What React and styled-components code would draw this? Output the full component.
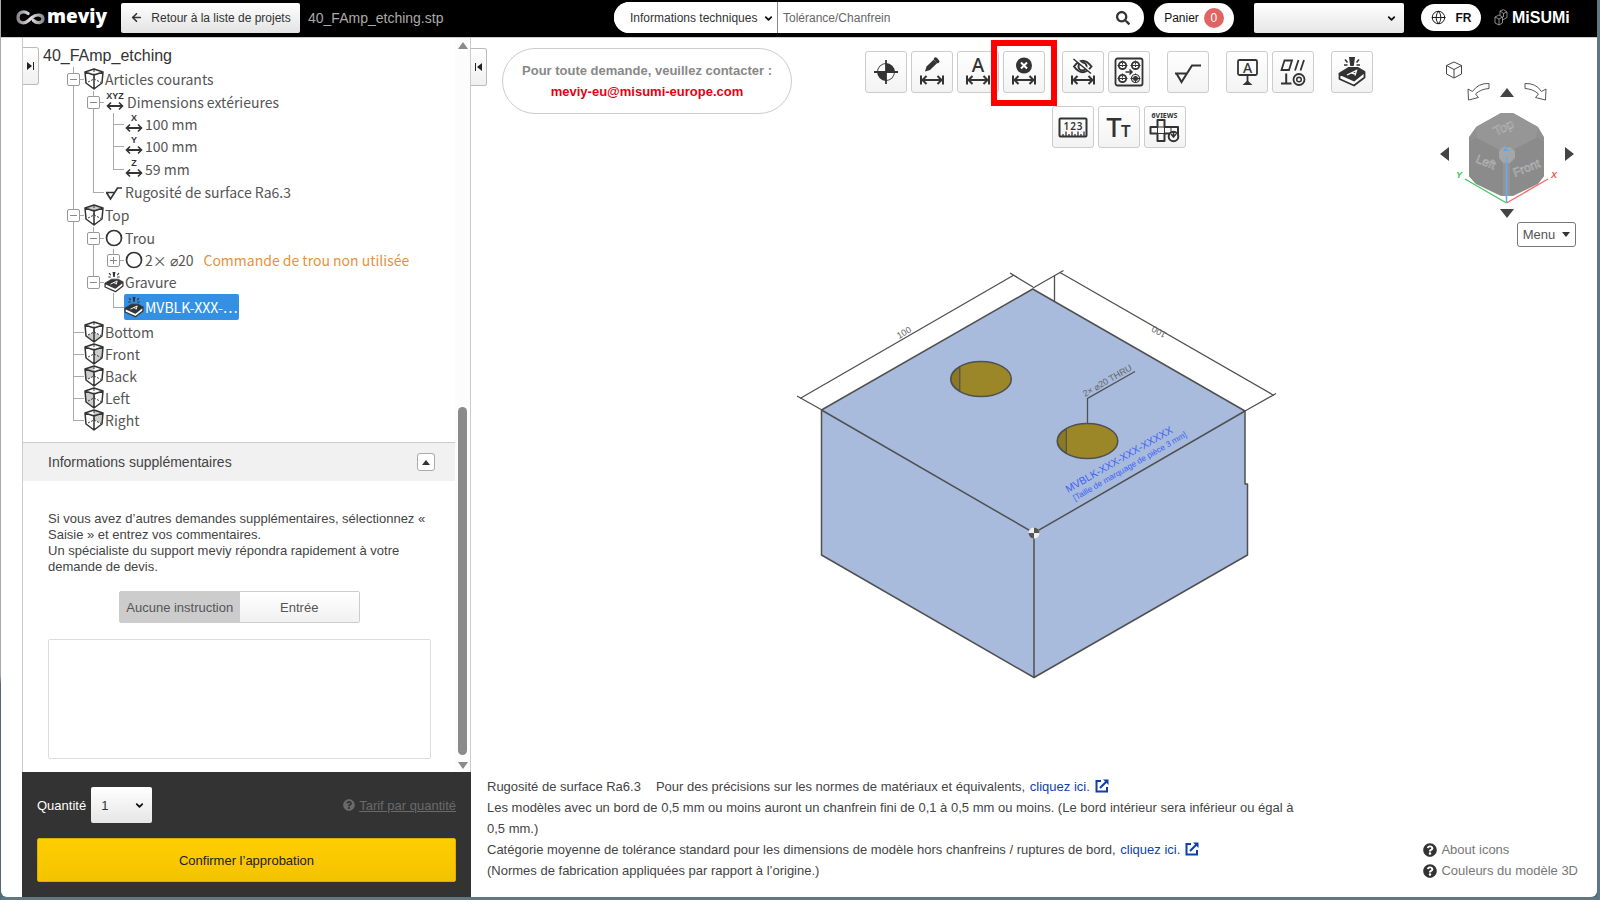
import React, { useState } from 'react';
import styled, { createGlobalStyle } from 'styled-components';
import { ArrowLeft, ChevronDown, Globe } from 'lucide-react';
import { FaSearch, FaQuestionCircle } from 'react-icons/fa';

const GlobalStyle = createGlobalStyle`
  * {
    box-sizing: border-box;
  }

  body {
    margin: 0;
    background: linear-gradient(to bottom, #a9a9ae 0%, #a9a9ae 75%, #4f6a76 76%, #4f6a76 100%);
    color: #444;
    font-family: "Liberation Sans", Arial, sans-serif;
    font-size: 13px;
  }

  button, select, input, textarea {
    font-family: inherit;
    color: inherit;
    margin: 0;
  }

  button {
    cursor: pointer;
    padding: 0;
  }
`;

const Window = styled.div`
  display: flex;
  flex-direction: column;
  height: 100vh;
  border: solid #5d7883;
  border-width: 0 3px 3px 0;
  margin-left: 1px;
`;

/* ---------- Header ---------- */

const Header = styled.header`
  display: flex;
  align-items: center;
  flex-shrink: 0;
  height: 37px;
  padding-bottom: 2px;
  background: #000;
`;

const HeaderStart = styled.div`
  display: flex;
  align-items: center;
  flex: 0 1 613px;
  padding-left: 15px;
`;

const Brand = styled.a`
  display: flex;
  align-items: center;
  gap: 2px;
  width: 105px;
  color: #fff;
  font: 800 19px/24px "Open Sans", sans-serif;
  text-decoration: none;

  span {
    padding-bottom: 4px;
  }
`;

const BackButton = styled.button`
  display: flex;
  align-items: center;
  justify-content: center;
  gap: 8px;
  width: 179px;
  height: 30px;
  border: 0;
  border-radius: 2px;
  background: linear-gradient(#fff, #e3e3e3);
  color: #333;
  font-size: 12px;
`;

const FileName = styled.span`
  margin-left: 8px;
  color: #aaa;
  font-size: 14px;
`;

const Search = styled.form`
  display: flex;
  align-items: center;
  flex: 1;
  height: 31px;
  margin: 0;
  border-radius: 16px;
  background: #fff;
  overflow: hidden;
`;

const SelectBox = styled.div`
  position: relative;
  flex: 0 0 auto;
  width: ${props => props.$width}px;
  height: ${props => props.$height || 30}px;
  margin-right: ${props => props.$after || 0}px;

  select {
    appearance: none;
    width: 100%;
    height: 100%;
    padding: 0 ${props => props.$pad || 8}px;
    border: 0;
    border-radius: ${props => (props.$plain ? 0 : 2)}px;
    border-right: ${props => (props.$plain ? '1px solid #888' : '0')};
    background: ${props => (props.$plain ? '#fff' : 'linear-gradient(#fff, #e6e6e6)')};
    color: #333;
    font-size: ${props => props.$size || 12}px;
  }

  svg {
    position: absolute;
    top: 50%;
    right: ${props => (props.$plain ? 4 : 7)}px;
    margin-top: -5px;
    color: #111;
    pointer-events: none;
  }
`;

const SearchInput = styled.input`
  flex: 1;
  min-width: 0;
  height: 100%;
  padding: 0 5px;
  border: 0;
  outline: 0;
  font-size: 12px;

  &::placeholder {
    color: #666;
    opacity: 1;
  }
`;

const SearchButton = styled.button`
  display: flex;
  align-items: center;
  width: 28px;
  border: 0;
  background: none;
  color: #333;
`;

const HeaderEnd = styled.div`
  display: flex;
  align-items: center;
  flex-shrink: 0;
  padding: 0 28px 0 10px;
`;

const Pill = styled.button`
  display: flex;
  align-items: center;
  justify-content: center;
  gap: ${props => props.$gap}px;
  width: ${props => props.$width}px;
  height: ${props => props.$height}px;
  margin-right: ${props => props.$after}px;
  border: 0;
  border-radius: 16px;
  background: #fff;
  color: #111;
  font-size: 12px;
  font-weight: ${props => (props.$bold ? 700 : 400)};
`;

const CartCount = styled.span`
  width: 20px;
  border-radius: 50%;
  background: #e06464;
  color: #fff;
  line-height: 20px;
`;

const Misumi = styled.a`
  display: flex;
  align-items: center;
  gap: 4px;
  width: 75px;
  color: #fff;
  font: 700 16px/20px "Liberation Sans", sans-serif;
  text-decoration: none;

  svg {
    flex-shrink: 0;
  }
`;

/* ---------- Layout ---------- */

const Body = styled.div`
  display: flex;
  flex: 1;
  min-height: 0;
  border-top: 1px solid #ccc;
  border-radius: 0 0 6px 6px;
  background: #fff;
`;

const Sidebar = styled.aside`
  display: flex;
  flex-direction: column;
  flex: 0 0 449px;
  margin-left: 21px;
  border: solid #ccc;
  border-width: 0 1px;
`;

const SidebarBody = styled.div`
  display: flex;
  flex: 1;
  min-height: 0;
`;

const SidebarContent = styled.div`
  flex: 1;
  min-width: 0;
  overflow: hidden;
`;

const ScrollTrack = styled.div`
  display: flex;
  flex-direction: column;
  align-items: center;
  width: 15px;
  padding: 4px 0 3px;
  background: #fcfcfc;
`;

const ScrollArrow = styled.span`
  border: 5px solid transparent;
  border-${props => (props.$down ? 'top' : 'bottom')}: 7px solid #8a8a8a;
  border-${props => (props.$down ? 'bottom' : 'top')}-width: 0;
`;

const ScrollThumb = styled.div`
  width: 9px;
  height: 348px;
  margin: auto 0 7px;
  border-radius: 5px;
  background: #8a8a8a;
`;

const EdgeButton = styled.button`
  display: flex;
  align-items: center;
  justify-content: center;
  flex-shrink: 0;
  width: 16px;
  height: 38px;
  border: 1px solid #bbb;
  border-left-width: 0;
  border-radius: 0 3px 3px 0;
  background: linear-gradient(#fff, #f0f0f0);
`;

/* ---------- Tree ---------- */

const TreeArea = styled.div`
  display: flex;
  align-items: flex-start;
  gap: 4px;
  height: 404px;
  padding-top: 9px;
`;

const TreeTitle = styled.h1`
  margin: 0;
  color: #333;
  font-size: 16px;
  font-weight: 400;
  line-height: 18px;
`;

const TreeList = styled.ul`
  margin: 2px 0 0 21px;
  padding: 0;
  list-style: none;
  color: #555;
  font: 14px/22px "Noto Sans CJK JP", sans-serif;
`;

const TreeRow = styled.li`
  display: flex;
  align-items: center;
  height: ${props => props.$height || 22}px;
  white-space: nowrap;
`;

// vertical and horizontal strokes are two background layers of one cell
const Guide = styled.span`
  display: flex;
  align-items: center;
  align-self: stretch;
  width: 20px;
  padding-left: 3px;
  background:
    linear-gradient(#aaa, #aaa) 9px 0 / ${props => (props.$v ? 1 : 0)}px ${props => (props.$v === 'half' ? '50%' : '100%')} no-repeat,
    linear-gradient(#aaa, #aaa) 9px 50% / ${props => (props.$h ? 11 : 0)}px 1px no-repeat;
`;

const Toggle = styled.button`
  display: flex;
  align-items: center;
  justify-content: center;
  width: 13px;
  height: 13px;
  border: 1px solid #999;
  border-radius: 2px;
  background: #fff;
`;

const TreeItem = styled.span`
  display: flex;
  align-items: center;
  height: ${props => (props.$selected ? '26px' : '100%')};
  padding-right: 1px;
  border-radius: 2px;
  background: ${props => (props.$selected ? '#3390e3' : 'none')};
  color: ${props => (props.$selected ? '#fff' : 'inherit')};

  svg {
    flex-shrink: 0;
    margin-right: 1px;
    color: #333;
  }
`;

const Warning = styled.span`
  margin-left: 10px;
  color: #e5933c;
`;

/* ---------- Extra information ---------- */

const SectionHead = styled.div`
  display: flex;
  align-items: center;
  justify-content: space-between;
  height: 39px;
  padding: 0 20px 0 25px;
  border-top: 1px solid #ccc;
  background: #f1f1f1;
`;

const SectionTitle = styled.h2`
  margin: 0;
  color: #444;
  font-size: 14px;
  font-weight: 400;
`;

const CollapseButton = styled.button`
  display: flex;
  align-items: center;
  justify-content: center;
  width: 18px;
  height: 18px;
  border: 1px solid #aaa;
  border-radius: 3px;
  background: #fff;
`;

const SectionBody = styled.div`
  padding: 30px 24px 0 25px;

  p {
    margin: 0;
    line-height: 16px;
  }
`;

const Segmented = styled.div`
  display: flex;
  width: 241px;
  height: 32px;
  margin: 16px auto;
  border: 1px solid #ccc;
  border-radius: 2px;
`;

const Segment = styled.button`
  flex: 1;
  border: 0;
  background: ${props => (props.$active ? '#ccc' : 'linear-gradient(#fff, #f1f1f1)')};
  color: #555;
  font-size: 13px;
`;

const Comment = styled.textarea`
  display: block;
  width: 100%;
  height: 120px;
  border: 1px solid #ddd;
  border-radius: 2px;
  background: #fff;
  resize: none;
`;

const OrderPanel = styled.div`
  flex-shrink: 0;
  margin: 0 -1px;
  padding: 15px 15px;
  background: #333;
`;

const OrderRow = styled.div`
  display: flex;
  align-items: center;
  margin-bottom: 15px;

  label {
    margin-right: 5px;
    color: #fff;
    font-size: 13px;
  }
`;

const PriceLink = styled.a`
  display: flex;
  align-items: center;
  gap: 4px;
  margin-left: auto;
  color: #6a6a6a;
  font-size: 13px;
`;

const ConfirmButton = styled.button`
  display: block;
  width: 100%;
  height: 44px;
  border: 1px solid #dcb000;
  border-radius: 2px;
  background: linear-gradient(#ffce00, #f3c300);
  color: #222;
  font-size: 13px;
`;

/* ---------- Viewer ---------- */

const Viewer = styled.main`
  display: flex;
  flex-direction: column;
  flex: 1;
  min-width: 0;
`;

const TopBar = styled.div`
  display: flex;
  align-items: flex-start;
  padding-top: 10px;
`;

const Contact = styled.div`
  flex-shrink: 0;
  width: 290px;
  margin: 0 10px 0 15px;
  padding: 11px 0;
  border: 1px solid #ccc;
  border-radius: 33px;
  color: #888;
  font-weight: 700;
  line-height: 21px;
  text-align: center;

  a {
    color: #e60012;
    text-decoration: none;
  }
`;

const Toolbar = styled.div`
  display: flex;
  flex-direction: column;
  align-items: center;
  flex: 1;
  gap: 13px;
  padding-top: 3px;
`;

const ToolRow = styled.div`
  display: flex;
  gap: 17px;
`;

const ToolGroup = styled.div`
  display: flex;
  gap: 4px;
`;

const ToolButton = styled.button`
  position: relative;
  width: 42px;
  height: 42px;
  border: 1px solid #ccc;
  border-radius: 3px;
  background: linear-gradient(#fff, #f3f3f3);
  color: #333;

  svg {
    display: block;
  }
`;

const Highlight = styled.span`
  position: absolute;
  top: -12px;
  left: -13px;
  width: 66px;
  height: 66px;
  border: 6px solid #f00;
`;

const ViewNav = styled.div`
  flex-shrink: 0;
  width: 162px;
  padding: 12px 21px 3px 3px;
`;

const NavRow = styled.div`
  display: flex;
  align-items: ${props => props.$align || 'center'};
  justify-content: ${props => props.$justify || 'center'};
  gap: ${props => props.$gap || 0}px;
  height: ${props => props.$height}px;
  padding: ${props => props.$padding || 0};
`;

const NavButton = styled.button`
  display: flex;
  border: 0;
  background: none;
  color: #444;
`;

const MenuButton = styled.button`
  display: flex;
  align-items: center;
  justify-content: center;
  gap: 7px;
  width: 59px;
  height: 25px;
  border: 1px solid #777;
  border-radius: 3px;
  background: #fff;
  color: #555;
  font-size: 13px;
`;

const Stage = styled.div`
  display: flex;
  flex: 1;
  align-items: flex-start;
  justify-content: center;
  min-height: 0;
`;

const Footer = styled.footer`
  display: flex;
  align-items: flex-end;
  justify-content: space-between;
  padding: 0 19px 16px 16px;
  line-height: 21px;
`;

const Notes = styled.div`
  flex: 0 1 820px;

  p {
    margin: 0;
  }

  a {
    margin-left: 1px;
    color: #0f3fa8;
    text-decoration: none;
  }

  svg {
    margin-left: 5px;
    vertical-align: -2px;
  }
`;

const Gap = styled.span`
  margin-right: 15px;
`;

const HelpLinks = styled.nav`
  display: flex;
  flex-direction: column;

  a {
    display: flex;
    align-items: center;
    gap: 4px;
    color: #777;
    text-decoration: none;
  }

  svg {
    color: #333;
  }
`;

/* ---------- Icons ---------- */

const faces = {
  top: '10,1 19,4 10,7 1,4',
  bottom: '2,15 10,11 18,15 10,21',
  front: '10,7 19,4 18,15 10,21',
  back: '1,4 10,1 10,11 2,15',
  left: '1,4 10,7 10,21 2,15',
  right: '10,1 19,4 18,15 10,11',
};

const CubeIcon = ({ face }) => (
  <svg width="20" height="22" viewBox="0 0 20 22" fill="none" stroke="currentColor">
    {face && <polygon points={faces[face]} fill="#ccc" stroke="none" />}
    <path d="M10 1L19 4L18 15L10 21L2 15L1 4ZM1 4L10 7L19 4M10 7V21" strokeWidth="1.5" strokeLinejoin="round" />
    <path d="M10 2V11L3 14.5M10 11L17 14.5" strokeDasharray="2 1.4" />
  </svg>
);

const AxisIcon = ({ text, width = 20 }) => (
  <svg width={width} height="24" viewBox={`0 -2 ${width} 24`} fill="none" stroke="currentColor">
    <text x={width / 2} y="7" textAnchor="middle" fontFamily="Liberation Sans" fontWeight="700" fontSize="9" fill="currentColor" stroke="none">{text}</text>
    <path d={`M${width / 2 - 7} 14H${width / 2 + 7}`} strokeWidth="2" />
    <path d={`M${width / 2 - 4} 10.500L${width / 2 - 7.5} 14L${width / 2 - 4} 17.500M${width / 2 + 4} 10.500L${width / 2 + 7.5} 14L${width / 2 + 4} 17.500`} strokeWidth="1.6" />
  </svg>
);

const RoughIcon = () => (
  <svg width="20" height="22" viewBox="0 0 20 22" fill="none" stroke="currentColor" strokeWidth="1.7">
    <path d="M2 11.500H11M2.500 11.500L6.500 18L13.500 7H18" />
  </svg>
);

const CircleIcon = () => (
  <svg width="20" height="20" viewBox="0 0 20 20" fill="none" stroke="currentColor" strokeWidth="1.7">
    <circle cx="10" cy="10" r="7.500" />
  </svg>
);

const etchShape = (
  <g>
    <path d="M8.500 22.500L17.500 17H27L33 20.500L23.500 28.500Z" fill="currentColor" stroke="currentColor" strokeLinejoin="round" />
    <path d="M8.500 23V28L23 34.500L33.500 26.500V21L23 29.500Z" fill="#fff" stroke="currentColor" strokeWidth="1.8" strokeLinejoin="round" />
    <path d="M16 24L25.500 19.500L24 24.500M20.500 22L24.500 23" fill="none" stroke="#fff" strokeWidth="1.300" />
    <path d="M19 7H23L22 14H20Z" fill="currentColor" />
    <path d="M14 8.500L16.500 11.500M28 8.500L25.500 11.500M13 14H16.500M29 14H25.500" stroke="currentColor" strokeWidth="1.500" />
  </g>
);

const EtchIcon = () => (
  <svg width="20" height="22" viewBox="7 6 28 30">{etchShape}</svg>
);

const Tool = ({ children }) => (
  <svg width="40" height="40" viewBox="1 1 40 40" fill="none" stroke="currentColor" strokeWidth="1.8">
    {children}
  </svg>
);

const DimArrow = () => (
  <path d="M10 24.500V33.500M32 24.500V33.500M11 29H31M15.500 25L11.500 29L15.500 33M26.500 25L30.500 29L26.500 33" strokeWidth="2" />
);

const toolIcons = {
  datum: (
    <Tool>
      <circle cx="21" cy="21" r="8" />
      <path d="M21 21V13A8 8 0 0 0 13 21ZM21 21V29A8 8 0 0 0 29 21Z" fill="#fff" stroke="none" />
      <path d="M21 21V13A8 8 0 0 1 29 21ZM21 21V29A8 8 0 0 1 13 21Z" fill="currentColor" stroke="none" />
      <path d="M21 9V33M9 21H33" />
    </Tool>
  ),
  edit: (
    <Tool>
      <DimArrow />
      <path d="M14 20.500L15.500 15.500L22.500 8.800L26 12.200L19 19Z" fill="currentColor" stroke="none" />
      <path d="M24.500 8L26.700 10.500" strokeWidth="3.500" strokeLinecap="round" />
    </Tool>
  ),
  letter: (
    <Tool>
      <DimArrow />
      <text x="21" y="21" textAnchor="middle" fontFamily="Noto Sans" fontWeight="500" fontSize="19" fill="currentColor" stroke="none">A</text>
    </Tool>
  ),
  remove: (
    <Tool>
      <DimArrow />
      <circle cx="21" cy="14.500" r="8" fill="currentColor" stroke="none" />
      <path d="M18 11.500L24 17.500M24 11.500L18 17.500" stroke="#fff" strokeWidth="2" />
    </Tool>
  ),
  hide: (
    <Tool>
      <DimArrow />
      <path d="M12 15.500Q20.500 4 29.500 15.500Q20.500 27 12 15.500Z" strokeWidth="2" />
      <circle cx="20.500" cy="15.500" r="4" strokeWidth="2" />
      <path d="M13 7.500L30 22" stroke="#fff" strokeWidth="2" />
      <path d="M11.500 8L29 22.500" strokeWidth="1.600" />
    </Tool>
  ),
  pattern: (
    <Tool>
      <rect x="7.500" y="7.500" width="27" height="27" rx="2" />
      <circle cx="14.500" cy="14.500" r="3.700" />
      <circle cx="27.500" cy="14.500" r="3.700" />
      <circle cx="14.500" cy="27.500" r="3.700" />
      <circle cx="27.500" cy="27.500" r="4" strokeWidth="1.200" />
      <circle cx="27.500" cy="27.500" r="1.600" fill="currentColor" />
      <path d="M9.500 14.500H19.500M22.500 14.500H32.500M9.500 27.500H19.500M22.500 27.500H32.500" strokeWidth="1" />
      <path d="M14.500 9.500V19.500M27.500 9.500V19.500M14.500 22.500V32.500M27.500 22.500V32.500" strokeWidth="1" strokeDasharray="1.500 1" />
      <path d="M17.500 21H24M21.500 18.500L24 21L21.500 23.500" strokeWidth="1.500" />
    </Tool>
  ),
  rough: (
    <Tool><path d="M8 22.500H20.500M9.500 22.500L14.500 31L25 14.500H34" strokeWidth="2" /></Tool>
  ),
  label: (
    <Tool>
      <rect x="12" y="9" width="19" height="15" rx="1.500" />
      <text x="21.500" y="21.500" textAnchor="middle" fontFamily="Noto Sans" fontWeight="500" fontSize="14" fill="currentColor" stroke="none">A</text>
      <path d="M21.500 24V31" />
      <path d="M16.500 34L21.500 29.500L26.500 34Z" fill="currentColor" stroke="none" />
    </Tool>
  ),
  tolerance: (
    <Tool>
      <path d="M9.500 19L12.500 9.500H20L17 19ZM23 19.500L26.500 9M28.500 19.500L32 9" />
      <path d="M9 32.500H19.500M14.200 32.500V22.500" strokeWidth="2" />
      <circle cx="27" cy="28.500" r="5.500" />
      <circle cx="27" cy="28.500" r="2.300" strokeWidth="1.500" />
    </Tool>
  ),
  etch: <Tool>{etchShape}</Tool>,
  ruler: (
    <Tool>
      <rect x="7.500" y="12.500" width="27" height="18" rx="1" strokeWidth="2" />
      <text x="21.500" y="24" textAnchor="middle" fontFamily="Noto Sans" fontWeight="600" fontSize="10" letterSpacing="1" fill="currentColor" stroke="none">123</text>
      <path d="M11 30V28M14 30V25.500M17 30V28M20 30V25.500M23 30V28M26 30V25.500M29 30V28M32 30V25.500" strokeWidth="1.300" />
    </Tool>
  ),
  text: (
    <Tool>
      <g fontFamily="Inter" fontWeight="500" fill="currentColor" stroke="none">
        <text x="7.500" y="31" fontSize="26">T</text>
        <text x="22.500" y="31" fontSize="16" fontWeight="600">T</text>
      </g>
    </Tool>
  ),
  views: (
    <Tool>
      <text x="20.500" y="11.500" textAnchor="middle" fontFamily="Noto Sans" fontWeight="700" fontSize="7" fill="currentColor" stroke="none">6VIEWS</text>
      <path d="M13.500 14H20.500V21H34V27.500H20.500V35H13.500V27.500H6.500V21H13.500Z" strokeWidth="2" strokeLinejoin="round" />
      <path d="M13.500 21H20.500V27.500H13.500ZM27 21V27.500" strokeWidth="1" />
      <circle cx="29.500" cy="30.500" r="4.800" fill="#f6f6f6" strokeWidth="2" />
      <path d="M29.500 25V30M27 28L29.500 31L32 28" strokeWidth="1.500" />
    </Tool>
  ),
};

const ExternalIcon = () => (
  <svg width="14" height="14" viewBox="0 0 14 14" fill="none" stroke="currentColor" strokeWidth="2">
    <path d="M6 2H1.500V12.500H12V8M5 9L11.500 2.500" />
    <path d="M8 0.500H13.500V6Z" fill="currentColor" stroke="none" />
  </svg>
);

const Arrow = ({ dir }) => {
  const shapes = {
    up: [14, 9, '0,9 7,0 14,9'],
    down: [14, 9, '0,0 14,0 7,9'],
    left: [9, 14, '9,0 9,14 0,7'],
    right: [9, 14, '0,0 9,7 0,14'],
  };
  const [w, h, points] = shapes[dir];
  return (
    <svg width={w} height={h}><polygon points={points} fill="currentColor" /></svg>
  );
};

const PanelIcon = ({ open }) => (
  <svg width="8" height="8" viewBox="0 0 8 8" fill="#222">
    {open ? <path d="M0 0H1V8H0ZM7 0V8L2 4Z" /> : <path d="M7 0H6V8H7ZM0 0V8L5 4Z" />}
  </svg>
);

const SmallArrow = ({ down }) => (
  <svg width="8" height="5"><polygon points={down ? '0,0 8,0 4,5' : '0,5 8,5 4,0'} fill="#333" /></svg>
);

const RotateIcon = ({ flip }) => (
  <svg width="23" height="20" viewBox="0 0 23 20" fill="#fff" stroke="#555" strokeLinejoin="round">
    <path d={flip
      ? 'M1 1.500Q12 1 17.500 9.500L22 7L21.500 18L11.500 15.500L14.500 12Q9 7 1 6.500Z'
      : 'M22 1.500Q11 1 5.500 9.500L1 7L1.500 18L11.500 15.500L8.500 12Q14 7 22 6.500Z'} />
  </svg>
);

const InfinityMark = () => (
  <svg width="29" height="15" viewBox="0 0 29 15" fill="none">
    <defs>
      <linearGradient id="mark" x1="0" x2="1">
        <stop offset="0" stopColor="#8d858d" />
        <stop offset="0.5" stopColor="#e6e2e6" />
        <stop offset="1" stopColor="#8a8a8a" />
      </linearGradient>
    </defs>
    <path d="M12 3.500C8 0.500 2 2 2 7.500C2 13 8 14.500 12.500 10.500L16 7.500C20 4 27 4 27 8.800C27 13.500 20.500 13.500 17.500 10.500" stroke="url(#mark)" strokeWidth="3.200" strokeLinecap="round" />
  </svg>
);

const MisumiMark = () => (
  <svg width="14" height="17" viewBox="0 0 14 17" fill="none" stroke="#aaa" strokeWidth="0.8">
    <path d="M1 8L5 6L8.500 8V14L5 16L1 14ZM1 8L5 10L8.500 8M5 10V16M6 2L9.500 0.600L13 3V8.500L8.500 11M6 2L9.500 4.500L13 3M9.500 4.500V8M6 2V6.500" />
  </svg>
);

const ViewCube = () => (
  <svg width="116" height="100" viewBox="1449 104 116 100">
    <path d="M1501 113H1513L1538 127L1544 137V176L1538 184L1513 196H1501L1476 184L1469 176V137L1476 127Z" fill="#909090" />
    <path d="M1476 138L1501 151L1506.500 147L1512 151L1537 138L1544 142V176L1538 183L1513 195H1500L1475 183L1469 176V142Z" fill="#8b8b8b" />
    <path d="M1476 127L1501 113H1513L1538 127L1536 138L1512 150H1501L1477 138Z" fill="#969696" />
    <path d="M1503 159V196H1510V159Z" fill="#949494" />
    <path d="M1499 151L1503 147H1510L1515 151V158L1510 163H1503L1499 158Z" fill="#a6a6a6" />
    <g fontFamily="Liberation Sans" fontSize="13" fill="#919191" stroke="#bdbdbd" strokeWidth="0.500">
      <text transform="translate(1496 136) rotate(-26)">Top</text>
      <text transform="translate(1475 162) rotate(22)" fontSize="12">Left</text>
      <text transform="translate(1515 177) rotate(-22)" fontSize="12">Front</text>
    </g>
    <path d="M1506.500 156V202" stroke="#6aa9ec" strokeWidth="1.600" />
    <path d="M1506.500 203L1465 179" stroke="#46c862" strokeWidth="1.400" />
    <path d="M1506.500 203L1548 179" stroke="#f26d6d" strokeWidth="1.400" />
    <g fontFamily="Liberation Sans" fontSize="9" fontStyle="italic" fontWeight="700">
      <text x="1503" y="151" fill="#5aa5f0">Z</text>
      <text x="1456" y="178" fill="#35c455">Y</text>
      <text x="1551" y="178" fill="#f25555">X</text>
    </g>
  </svg>
);

const Model = () => (
  <svg width="509" height="440" viewBox="0 0 509 440" fill="none" stroke="#505050" strokeWidth="1.500">
    <path d="M252.700 39L465 161V234H467.500V305L254 427.500L41.500 305V160Z" fill="#a8bbdc" strokeLinejoin="round" />
    <path d="M41.500 160L254 283L465 161M254 283V427" />
    <g fill="#9b8728">
      <ellipse cx="201" cy="129" rx="30.300" ry="17.500" />
      <ellipse cx="307.500" cy="191" rx="30.300" ry="17.500" />
    </g>
    <path d="M171 129A30 17.500 0 0 1 179.800 117V141A30 17.500 0 0 1 171 129ZM277.500 191A30 17.500 0 0 1 286.300 179V203A30 17.500 0 0 1 277.500 191Z" fill="#8b7924" strokeWidth="1.200" />
    <g strokeWidth="1.300">
      <path d="M20 148.500L234 25M17 146L42 160M230 23L253 37" />
      <path d="M280 22.500L494 145.500M253 38L283.500 20.500M465 161L496 143.500M274.500 26V51" />
      <path d="M307.500 173V148.500L355 121.500" />
    </g>
    <g fontFamily="Liberation Sans" fontSize="9" fill="#666" stroke="none">
      <text transform="translate(119 89) rotate(-30)">100</text>
      <text transform="translate(387 83) rotate(210)">100</text>
      <text transform="translate(305 147) rotate(-30)">2× ⌀20 THRU</text>
    </g>
    <g fontFamily="Liberation Sans" fill="#3c62f5" stroke="none">
      <text transform="translate(288 243) rotate(-30)" fontSize="10.400">MVBLK-XXX-XXX-XXXXX</text>
      <text transform="translate(295 251) rotate(-30)" fontSize="8.200">[Taille de marquage de pièce 3 mm]</text>
    </g>
    <circle cx="254" cy="283" r="5.500" fill="#eee" stroke="none" />
    <path d="M254 283V277.500A5.500 5.500 0 0 1 259.500 283ZM254 283V288.500A5.500 5.500 0 0 1 248.500 283Z" fill="#555" stroke="none" />
  </svg>
);

/* ---------- Data ---------- */

// guides: | full line, + branch, L last branch, - collapsible, * collapsible last, space empty
const treeRows = [
  { guides: '-', open: true, icon: <CubeIcon />, label: 'Articles courants', height: 24 },
  { guides: '|-', open: true, icon: <AxisIcon text="XYZ" width={22} />, label: 'Dimensions extérieures' },
  { guides: '||+', icon: <AxisIcon text="X" />, label: '100 mm' },
  { guides: '||+', icon: <AxisIcon text="Y" />, label: '100 mm' },
  { guides: '||L', icon: <AxisIcon text="Z" />, label: '59 mm', height: 24 },
  { guides: '|L', icon: <RoughIcon />, label: 'Rugosité de surface Ra6.3' },
  { guides: '-', open: true, icon: <CubeIcon face="top" />, label: 'Top', height: 24 },
  { guides: '|-', open: true, icon: <CircleIcon />, label: 'Trou' },
  { guides: '||*', icon: <CircleIcon />, label: '2× ⌀20', warning: 'Commande de trou non utilisée' },
  { guides: '|*', open: true, icon: <EtchIcon />, label: 'Gravure' },
  { guides: '| L', icon: <EtchIcon />, label: 'MVBLK-XXX-…', selected: true, height: 28 },
  { guides: '+', icon: <CubeIcon face="bottom" />, label: 'Bottom' },
  { guides: '+', icon: <CubeIcon face="front" />, label: 'Front' },
  { guides: '+', icon: <CubeIcon face="back" />, label: 'Back' },
  { guides: '+', icon: <CubeIcon face="left" />, label: 'Left' },
  { guides: 'L', icon: <CubeIcon face="right" />, label: 'Right' },
];

const toolRows = [
  [['datum', 'edit', 'letter', 'remove'], ['hide', 'pattern'], ['rough'], ['label', 'tolerance'], ['etch']],
  [['ruler', 'text', 'views']],
];

const TreeNode = ({ row }) => (
  <TreeRow $height={row.height}>
    {row.guides.split('').map((kind, i) => (
      <Guide
        key={i}
        $v={kind === ' ' ? null : 'L*'.includes(kind) ? 'half' : 'full'}
        $h={'+L-*'.includes(kind)}
      >
        {'-*'.includes(kind) && (
          <Toggle type="button" aria-label={row.label} aria-expanded={!!row.open}>
            <svg width="7" height="7" stroke="#888"><path d={row.open ? 'M0 3.500H7' : 'M0 3.500H7M3.500 0V7'} /></svg>
          </Toggle>
        )}
      </Guide>
    ))}
    <TreeItem $selected={row.selected}>
      {row.icon}
      {row.label}
      {row.warning && <Warning>{row.warning}</Warning>}
    </TreeItem>
  </TreeRow>
);

const App = () => {
  const [mode, setMode] = useState('none');

  return (
    <>
      <GlobalStyle />
      <Window>
        <Header>
          <HeaderStart>
            <Brand href="#"><InfinityMark /><span>meviy</span></Brand>
            <BackButton type="button"><ArrowLeft size={13} strokeWidth={3} />Retour à la liste de projets</BackButton>
            <FileName>40_FAmp_etching.stp</FileName>
          </HeaderStart>
          <Search>
            <SelectBox $width={164} $height={31} $pad={16} $plain>
              <select aria-label="Catégorie de recherche">
                <option>Informations techniques</option>
              </select>
              <ChevronDown size={11} strokeWidth={4} />
            </SelectBox>
            <SearchInput aria-label="Recherche" placeholder="Tolérance/Chanfrein" />
            <SearchButton type="button" aria-label="Rechercher"><FaSearch size={14} /></SearchButton>
          </Search>
          <HeaderEnd>
            <Pill type="button" $width={80} $height={30} $gap={5} $after={20}>
              Panier<CartCount>0</CartCount>
            </Pill>
            <SelectBox $width={150} $after={17}>
              <select aria-label="Compte"><option></option></select>
              <ChevronDown size={11} strokeWidth={4} />
            </SelectBox>
            <Pill type="button" $width={60} $height={27} $gap={10} $after={13} $bold>
              <Globe size={15} strokeWidth={1.5} />FR
            </Pill>
            <Misumi href="#"><MisumiMark />MiSUMi</Misumi>
          </HeaderEnd>
        </Header>

        <Body>
          <Sidebar>
            <SidebarBody>
              <SidebarContent>
                <TreeArea>
                  <EdgeButton type="button" aria-label="Ouvrir le panneau"><PanelIcon /></EdgeButton>
                  <div>
                    <TreeTitle>40_FAmp_etching</TreeTitle>
                    <TreeList>
                      {treeRows.map((row, i) => <TreeNode key={i} row={row} />)}
                    </TreeList>
                  </div>
                </TreeArea>
                <SectionHead>
                  <SectionTitle>Informations supplémentaires</SectionTitle>
                  <CollapseButton type="button" aria-label="Réduire"><SmallArrow /></CollapseButton>
                </SectionHead>
                <SectionBody>
                  <p>Si vous avez d’autres demandes supplémentaires, sélectionnez « Saisie » et entrez vos commentaires.</p>
                  <p>Un spécialiste du support meviy répondra rapidement à votre demande de devis.</p>
                  <Segmented>
                    <Segment type="button" $active={mode === 'none'} onClick={() => setMode('none')}>Aucune instruction</Segment>
                    <Segment type="button" $active={mode === 'input'} onClick={() => setMode('input')}>Entrée</Segment>
                  </Segmented>
                  <Comment aria-label="Commentaires" />
                </SectionBody>
              </SidebarContent>
              <ScrollTrack>
                <ScrollArrow />
                <ScrollThumb />
                <ScrollArrow $down />
              </ScrollTrack>
            </SidebarBody>
            <OrderPanel>
              <OrderRow>
                <label htmlFor="quantity">Quantité</label>
                <SelectBox $width={61} $height={36} $pad={10} $size={13}>
                  <select id="quantity"><option>1</option></select>
                  <ChevronDown size={11} strokeWidth={4} />
                </SelectBox>
                <PriceLink href="#"><FaQuestionCircle size={12} />Tarif par quantité</PriceLink>
              </OrderRow>
              <ConfirmButton type="button">Confirmer l’approbation</ConfirmButton>
            </OrderPanel>
          </Sidebar>

          <Viewer>
            <TopBar>
              <EdgeButton type="button" aria-label="Fermer le panneau"><PanelIcon open /></EdgeButton>
              <Contact>
                Pour toute demande, veuillez contacter :<br />
                <a href="mailto:meviy-eu@misumi-europe.com">meviy-eu@misumi-europe.com</a>
              </Contact>
              <Toolbar>
                {toolRows.map((groups, r) => (
                  <ToolRow key={r}>
                    {groups.map(group => (
                      <ToolGroup key={group[0]}>
                        {group.map(name => (
                          <ToolButton key={name} type="button" aria-label={name}>
                            {toolIcons[name]}
                            {name === 'remove' && <Highlight />}
                          </ToolButton>
                        ))}
                      </ToolGroup>
                    ))}
                  </ToolRow>
                ))}
              </Toolbar>
              <ViewNav>
                <NavRow $height={20} $justify="flex-start" $padding="0 0 0 7px">
                  <NavButton type="button" aria-label="Vue isométrique">
                    <svg width="18" height="18" viewBox="0 0 18 18" fill="none" stroke="#444">
                      <path d="M9 1L16.500 4.500V13L9 17L1.500 13V4.500ZM1.500 4.500L9 8.500L16.500 4.500M9 8.500V17" />
                    </svg>
                  </NavButton>
                </NavRow>
                <NavRow $height={24} $gap={10}>
                  <NavButton type="button" aria-label="Rotation gauche"><RotateIcon /></NavButton>
                  <NavButton type="button" aria-label="Haut"><Arrow dir="up" /></NavButton>
                  <NavButton type="button" aria-label="Rotation droite"><RotateIcon flip /></NavButton>
                </NavRow>
                <NavRow $height={100}>
                  <NavButton type="button" aria-label="Gauche"><Arrow dir="left" /></NavButton>
                  <ViewCube />
                  <NavButton type="button" aria-label="Droite"><Arrow dir="right" /></NavButton>
                </NavRow>
                <NavRow $height={18}>
                  <NavButton type="button" aria-label="Bas"><Arrow dir="down" /></NavButton>
                </NavRow>
                <NavRow $height={25} $justify="flex-end">
                  <MenuButton type="button">Menu<SmallArrow down /></MenuButton>
                </NavRow>
              </ViewNav>
            </TopBar>
            <Stage><Model /></Stage>
            <Footer>
              <Notes>
                <p><Gap>Rugosité de surface Ra6.3</Gap>Pour des précisions sur les normes de matériaux et équivalents, <a href="#">cliquez ici.<ExternalIcon /></a></p>
                <p>Les modèles avec un bord de 0,5 mm ou moins auront un chanfrein fini de 0,1 à 0,5 mm ou moins. (Le bord intérieur sera inférieur ou égal à 0,5 mm.)</p>
                <p>Catégorie moyenne de tolérance standard pour les dimensions de modèle hors chanfreins / ruptures de bord, <a href="#">cliquez ici.<ExternalIcon /></a></p>
                <p>(Normes de fabrication appliquées par rapport à l’origine.)</p>
              </Notes>
              <HelpLinks>
                <a href="#"><FaQuestionCircle size={14} />About icons</a>
                <a href="#"><FaQuestionCircle size={14} />Couleurs du modèle 3D</a>
              </HelpLinks>
            </Footer>
          </Viewer>
        </Body>
      </Window>
    </>
  );
};

export default App;
